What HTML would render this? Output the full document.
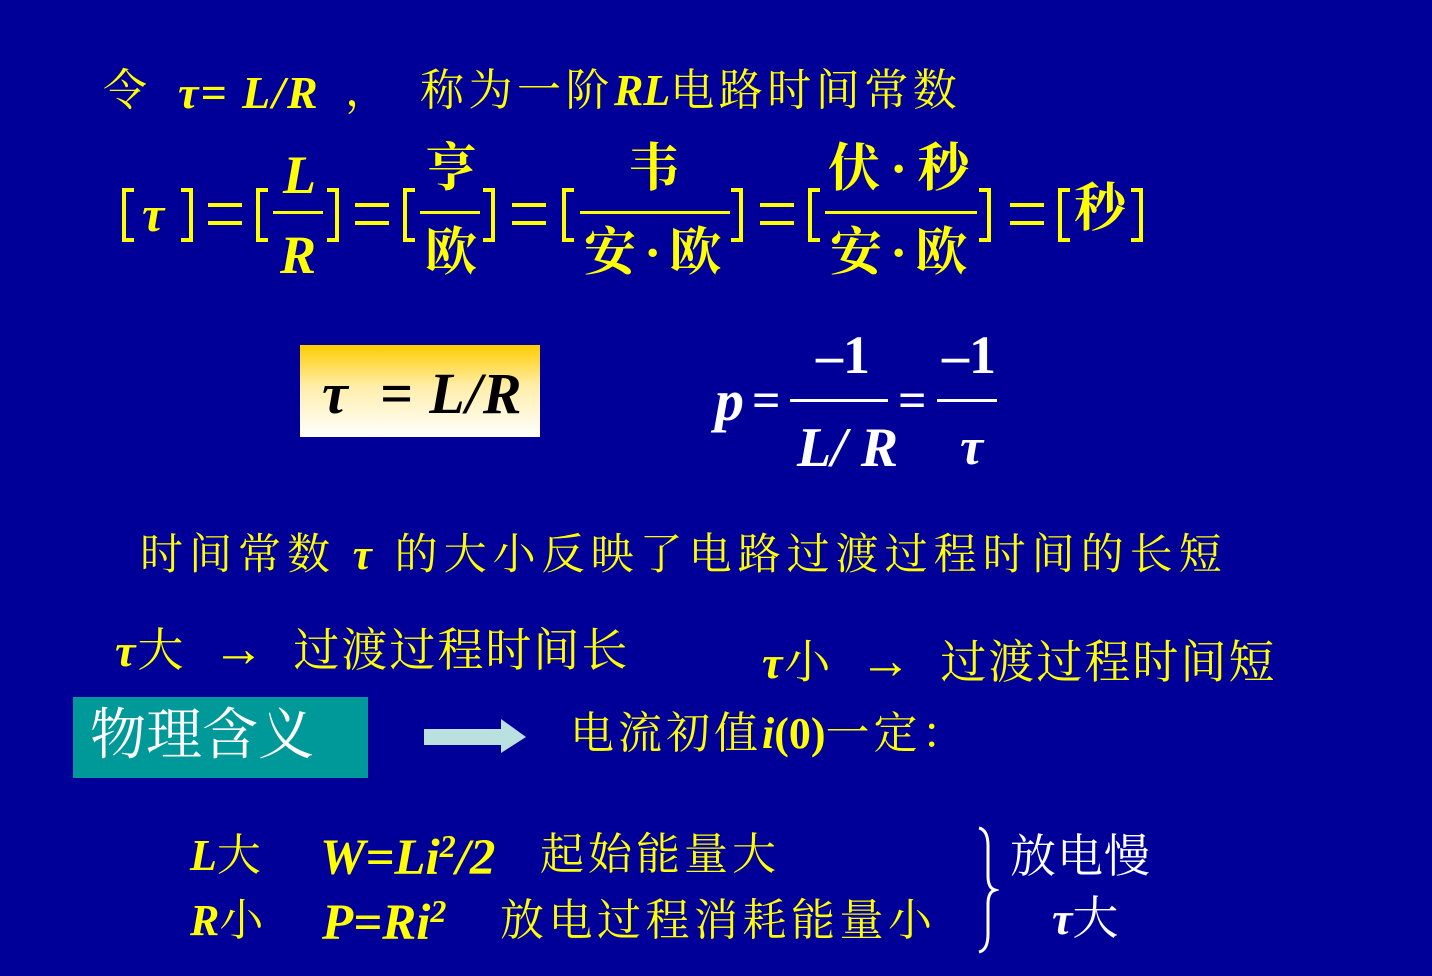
<!DOCTYPE html>
<html><head><meta charset="utf-8"><style>
html,body{margin:0;padding:0}
body{width:1432px;height:976px;background:#000099;position:relative;overflow:hidden;font-family:"Liberation Serif","Noto Serif CJK SC",serif;color:#ffff00}
.t{position:absolute;white-space:nowrap;line-height:1}
.c{font-family:"Liberation Serif","Noto Serif CJK SC",serif}
.b{font-weight:bold}
.i{font-style:italic;font-weight:bold}
.br{position:absolute;border:4px solid #ff0;width:8px;height:46px;top:188px}
.bl{border-right:none}.bR{border-left:none}
.eq{position:absolute;width:34px;height:14px;border-top:4px solid #ff0;border-bottom:4px solid #ff0;top:203px}
.ln{position:absolute;height:3px;background:#ff0;top:211px}
.w{color:#fff}
</style></head><body>
<div class="t c" style="left:103px;top:69px;font-size:44px">令</div>
<div class="t i" style="left:178px;top:70px;font-size:46px;letter-spacing:2px">τ= L/R</div>
<div class="t c" style="left:345px;top:69px;font-size:44px">，</div>
<div class="t c" style="left:420px;top:69px;font-size:44px;letter-spacing:4.5px">称为一阶<b style="font-style:italic;letter-spacing:0">RL</b>电路时间常数</div>

<div class="br bl" style="left:122px"></div>
<div class="t i" style="left:142px;top:189px;font-size:50px">τ</div>
<div class="br bR" style="left:181px"></div>
<div class="eq" style="left:208px"></div>
<div class="br bl" style="left:256px"></div>
<div class="t i" style="left:283px;top:148px;font-size:54px">L</div>
<div class="ln" style="left:273px;width:50px"></div>
<div class="t i" style="left:280px;top:228px;font-size:54px">R</div>
<div class="br bR" style="left:327px"></div>
<div class="eq" style="left:355px"></div>
<div class="br bl" style="left:403px"></div>
<div class="t c b" style="left:425px;top:144px;font-size:52px">亨</div>
<div class="ln" style="left:420px;width:60px"></div>
<div class="t c b" style="left:425px;top:228px;font-size:52px">欧</div>
<div class="br bR" style="left:483px"></div>
<div class="eq" style="left:512px"></div>
<div class="br bl" style="left:562px"></div>
<div class="t c b" style="left:628px;top:144px;font-size:52px">韦</div>
<div class="ln" style="left:580px;width:150px"></div>
<div class="t c b" style="left:584px;top:228px;font-size:52px;letter-spacing:8px">安·欧</div>
<div class="br bR" style="left:731px"></div>
<div class="eq" style="left:760px"></div>
<div class="br bl" style="left:808px"></div>
<div class="t c b" style="left:828px;top:144px;font-size:52px;letter-spacing:10px">伏·秒</div>
<div class="ln" style="left:825px;width:152px"></div>
<div class="t c b" style="left:830px;top:228px;font-size:52px;letter-spacing:8px">安·欧</div>
<div class="br bR" style="left:979px"></div>
<div class="eq" style="left:1010px"></div>
<div class="br bl" style="left:1058px"></div>
<div class="t c b" style="left:1074px;top:184px;font-size:52px">秒</div>
<div class="br bR" style="left:1131px"></div>

<div style="position:absolute;left:300px;top:345px;width:240px;height:92px;background:linear-gradient(#ffcc00,#ffeeaa 45%,#ffffff)"></div>
<div class="t i" style="left:322px;top:365px;font-size:58px;color:#000;letter-spacing:1px">τ &nbsp;= L/R</div>

<div class="t i" style="left:715px;top:372px;font-size:58px;color:#fff">p</div>
<div class="t b" style="left:752px;top:375px;font-size:50px;color:#fff">=</div>
<div class="t b" style="left:816px;top:328px;font-size:54px;color:#fff">–1</div>
<div style="position:absolute;left:790px;top:399px;width:98px;height:3px;background:#fff"></div>
<div class="t i" style="left:797px;top:420px;font-size:56px;color:#fff">L/ R</div>
<div class="t b" style="left:898px;top:375px;font-size:50px;color:#fff">=</div>
<div class="t b" style="left:942px;top:328px;font-size:54px;color:#fff">–1</div>
<div style="position:absolute;left:937px;top:399px;width:60px;height:3px;background:#fff"></div>
<div class="t i" style="left:960px;top:422px;font-size:52px;color:#fff">τ</div>

<div class="t c" style="left:140px;top:534px;font-size:43px;letter-spacing:6px">时间常数 <b style="font-style:italic">τ</b> 的大小反映了电路过渡过程时间的长短</div>
<div class="t c" style="left:115px;top:624px;font-size:46px;letter-spacing:2px"><b style="font-style:italic">τ</b>大 &nbsp;<span style="font-size:52px">→</span> &nbsp;过渡过程时间长</div>
<div class="t c" style="left:762px;top:636px;font-size:46px;letter-spacing:2px"><b style="font-style:italic">τ</b>小 &nbsp;<span style="font-size:52px">→</span> &nbsp;过渡过程时间短</div>

<div style="position:absolute;left:73px;top:697px;width:295px;height:81px;background:#009999"></div>
<div class="t c" style="left:90px;top:708px;font-size:56px;color:#fff">物理含义</div>
<svg style="position:absolute;left:424px;top:719px" width="102" height="36"><polygon points="0,10 77,10 77,0 102,18 77,34 77,26 0,26" fill="#bbe0e0"/></svg>
<div class="t c" style="left:570px;top:712px;font-size:44px;letter-spacing:4px">电流初值<b style="font-style:italic;letter-spacing:0">i</b><b style="letter-spacing:0">(0)</b>一定：</div>

<div class="t c" style="left:190px;top:834px;font-size:44px"><b style="font-style:italic">L</b>大</div>
<div class="t i" style="left:320px;top:830px;font-size:51px">W=Li<span style="font-size:32px;vertical-align:17px">2</span>/2</div>
<div class="t c" style="left:540px;top:833px;font-size:44px;letter-spacing:4px">起始能量大</div>
<div class="t c" style="left:190px;top:899px;font-size:44px"><b style="font-style:italic">R</b>小</div>
<div class="t i" style="left:322px;top:895px;font-size:51px">P=Ri<span style="font-size:32px;vertical-align:17px">2</span></div>
<div class="t c" style="left:500px;top:899px;font-size:44px;letter-spacing:4.5px">放电过程消耗能量小</div>
<svg style="position:absolute;left:975px;top:826px" width="24" height="128"><path d="M4,2 Q13,4 13,20 L13,50 Q13,62 20,64 Q13,66 13,78 L13,108 Q13,124 4,126" fill="none" stroke="#fff" stroke-width="3"/></svg>
<div class="t c" style="left:1010px;top:834px;font-size:46px;color:#fff;letter-spacing:1px">放电慢</div>
<div class="t c" style="left:1052px;top:896px;font-size:46px;color:#fff"><b style="font-style:italic">τ</b>大</div>
</body></html>
